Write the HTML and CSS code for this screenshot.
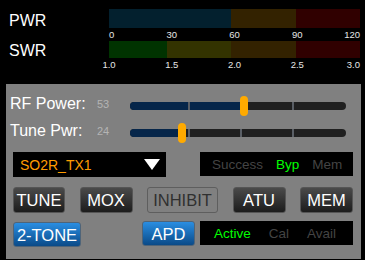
FILE: index.html
```html
<!DOCTYPE html>
<html lang="en">
<head>
  <meta charset="utf-8">
  <title>TX Panel</title>
  <link rel="stylesheet" href="styles.css">
</head>
<body>
  <div class="meters">
    <div class="meter meter-pwr">
      <div class="meter-label">PWR</div>
      <div class="meter-body">
        <div class="bar">
          <span class="seg seg-blue" style="flex: 122"></span>
          <span class="seg seg-brown" style="flex: 65"></span>
          <span class="seg seg-red" style="flex: 64"></span>
        </div>
        <div class="scale">
          <span class="first-left">0</span>
          <span>30</span>
          <span>60</span>
          <span>90</span>
          <span class="last">120</span>
        </div>
      </div>
    </div>
    <div class="meter meter-swr">
      <div class="meter-label">SWR</div>
      <div class="meter-body">
        <div class="bar">
          <span class="seg seg-green" style="flex: 58"></span>
          <span class="seg seg-olive" style="flex: 64"></span>
          <span class="seg seg-brown" style="flex: 65"></span>
          <span class="seg seg-red" style="flex: 64"></span>
        </div>
        <div class="scale">
          <span>1.0</span>
          <span>1.5</span>
          <span>2.0</span>
          <span>2.5</span>
          <span class="last">3.0</span>
        </div>
      </div>
    </div>
  </div>

  <div class="panel">
    <div class="slider-row">
      <div class="slider-label">RF Power:</div>
      <div class="slider-value">53</div>
      <div class="track">
        <div class="fill" style="width: 53%"></div>
        <div class="ticks"><span></span><span></span><span></span><span></span></div>
        <div class="thumb" style="left: 53%"></div>
      </div>
    </div>
    <div class="slider-row">
      <div class="slider-label">Tune Pwr:</div>
      <div class="slider-value">24</div>
      <div class="track">
        <div class="fill" style="width: 24%"></div>
        <div class="ticks"><span></span><span></span><span></span><span></span></div>
        <div class="thumb" style="left: 24%"></div>
      </div>
    </div>

    <div class="select-row">
      <div class="dropdown">
        <span class="dropdown-text">SO2R_TX1</span>
        <span class="dropdown-arrow"></span>
      </div>
      <div class="status status-tuner">
        <span>Success</span>
        <span class="on">Byp</span>
        <span>Mem</span>
      </div>
    </div>

    <div class="button-row">
      <button class="btn btn-tune">TUNE</button>
      <button class="btn btn-mox">MOX</button>
      <button class="btn btn-outline btn-inhibit">INHIBIT</button>
      <button class="btn btn-atu">ATU</button>
      <button class="btn btn-mem">MEM</button>
    </div>

    <div class="bottom-row">
      <button class="btn btn-blue btn-twotone">2-TONE</button>
      <button class="btn btn-blue btn-apd">APD</button>
      <div class="status status-apd">
        <span class="on">Active</span>
        <span>Cal</span>
        <span>Avail</span>
      </div>
    </div>
  </div>
</body>
</html>
```

FILE: styles.css
```css
html, body {
    margin: 0;
    padding: 0;
}

body {
    background-color: #000000;
    color: #ffffff;
    font-family: "Liberation Sans", Arial, sans-serif;
    width: 365px;
    height: 260px;
    overflow: hidden;
}

/* meters */
.meters {
    padding-top: 9px;
}

.meter {
    display: grid;
    grid-template-columns: 109px 251px;
}

.meter-label {
    padding-left: 9px;
    font-size: 16px;
    line-height: 18px;
}

.meter-pwr .meter-label {
    padding-top: 3px;
}

.meter-swr .meter-label {
    padding-top: 1px;
}

.bar {
    display: flex;
    height: 19px;
}

.meter-swr .bar {
    height: 17px;
}

.seg-blue { background-color: #03202e; }
.seg-brown { background-color: #332200; }
.seg-red { background-color: #300000; }
.seg-green { background-color: #003300; }
.seg-olive { background-color: #333300; }

.scale {
    display: flex;
    justify-content: space-between;
    height: 13px;
    font-size: 9.5px;
    line-height: 13px;
    color: #e6e6e6;
}

.scale span {
    width: 0;
    display: flex;
    justify-content: center;
    white-space: nowrap;
}

.scale span.first-left {
    justify-content: flex-start;
}

.scale span.last {
    justify-content: flex-end;
}

/* panel */
.panel {
    margin: 13px 0 0 6px;
    width: 355px;
    height: 175px;
    box-sizing: border-box;
    background-color: #808080;
    padding: 10px 8px 0 7px;
}

.slider-row {
    display: grid;
    grid-template-columns: 87px 33px 216px;
    align-items: start;
    height: 24px;
    margin: 0 0 3px -3px;
}

.slider-label {
    font-size: 16px;
    line-height: 20px;
    white-space: nowrap;
}

.slider-value {
    font-size: 11px;
    line-height: 20px;
    color: #b4b4b4;
}

.track {
    position: relative;
    margin-top: 8px;
    height: 8px;
    border-radius: 4px;
    background-color: #202020;
}

.fill {
    height: 100%;
    border-radius: 4px 0 0 4px;
    background-color: #06264a;
}

.ticks {
    position: absolute;
    inset: 0;
    display: grid;
    grid-template-columns: 60px 52px 52px 1fr;
}

.ticks span {
    border-right: 2px solid #5a5f66;
}

.ticks span:last-child {
    border-right: none;
}

.thumb {
    position: absolute;
    top: -6px;
    width: 8px;
    height: 20px;
    margin-left: -4px;
    border-radius: 4px;
    background-color: #ffaa00;
}

/* dropdown + status */
.select-row {
    display: flex;
    justify-content: space-between;
    margin-top: 7px;
}

.dropdown {
    display: flex;
    align-items: center;
    justify-content: space-between;
    width: 153px;
    height: 25px;
    box-sizing: border-box;
    padding: 0 6px 0 7px;
    background-color: #000000;
}

.dropdown-text {
    color: #ff9c00;
    font-size: 14px;
}

.dropdown-arrow {
    width: 0;
    height: 0;
    border-left: 8.5px solid transparent;
    border-right: 8.5px solid transparent;
    border-top: 11px solid #ffffff;
}

.status {
    display: flex;
    align-items: center;
    gap: 13px;
    width: 153px;
    height: 24px;
    box-sizing: border-box;
    padding-left: 12px;
    background-color: #000000;
    color: #444444;
    font-size: 13.5px;
}

.status .on {
    color: #00ff00;
}

/* buttons */
.button-row {
    display: flex;
    justify-content: space-between;
    margin-top: 10px;
}

.btn {
    height: 26px;
    box-sizing: border-box;
    padding: 0;
    border: 1px solid #555555;
    border-radius: 3px;
    background: linear-gradient(#4a4a4a, #1c1c1c);
    color: #ffffff;
    font-family: inherit;
    font-size: 16.5px;
    line-height: 24px;
    text-align: center;
}

.btn-tune { width: 52px; }
.btn-mox { width: 53px; }
.btn-atu { width: 53px; }
.btn-mem { width: 53px; }

.btn.btn-outline {
    width: 71px;
    background: #808080;
    border-color: #5e5e5e;
    color: #303030;
}

.btn-blue {
    background: linear-gradient(#2a8ee2, #0a4a88);
    border-color: #4f6478;
}

.bottom-row {
    display: flex;
    align-items: flex-start;
    margin-top: 8px;
}

.btn-twotone {
    width: 68px;
    margin-top: 1px;
    height: 25px;
}

.btn-apd {
    width: 53px;
    height: 25px;
    margin-left: 61px;
}

.status-apd {
    margin-left: 5px;
    padding-left: 14px;
    gap: 18px;
}
```
